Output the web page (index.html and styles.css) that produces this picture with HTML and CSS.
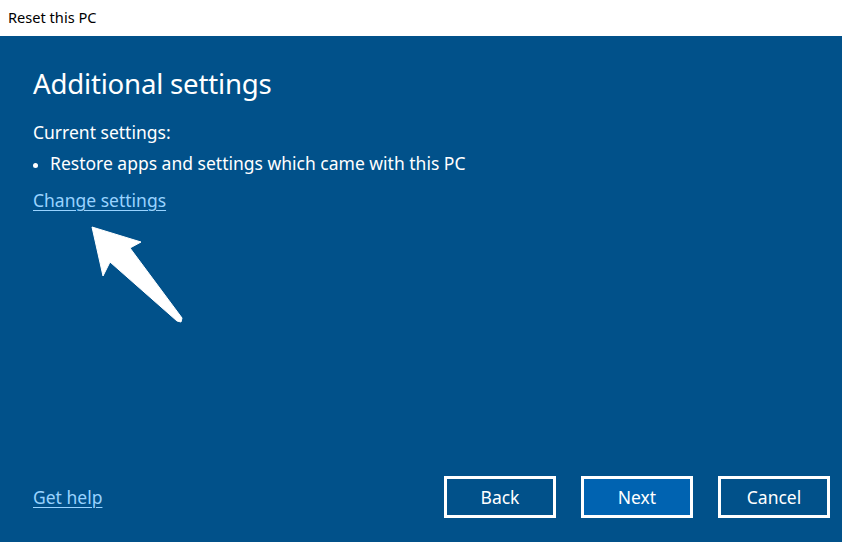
FILE: index.html
```html
<!DOCTYPE html>
<html>
<head>
<meta charset="utf-8">
<link rel="stylesheet" href="styles.css">
</head>
<body>
<div class="window">
  <div class="titlebar">Reset this PC</div>
  <div class="content">
    <div class="main">
      <h1 class="heading">Additional settings</h1>
      <p class="label">Current settings:</p>
      <ul class="list">
        <li>Restore apps and settings which came with this PC</li>
      </ul>
      <a class="link change" href="#">Change settings</a>
      <svg class="arrow" width="100" height="110" viewBox="88 222 100 110">
        <polygon points="92,227 141,242 130,248 182,318 181,322 177,321 110,262 103,276" fill="#ffffff" stroke="#ffffff" stroke-width="1" stroke-linejoin="round"/>
      </svg>
    </div>
    <div class="footer">
      <a class="link" href="#">Get help</a>
      <div class="buttons">
        <button class="btn">Back</button>
        <button class="btn primary">Next</button>
        <button class="btn">Cancel</button>
      </div>
    </div>
  </div>
</div>
</body>
</html>
```
FILE: styles.css
```css
* { box-sizing: border-box; }
html, body { margin: 0; padding: 0; }
body {
  width: 842px;
  height: 542px;
  overflow: hidden;
  font-family: "Noto Sans", "Open Sans", sans-serif;
  background: #01518a;
}
.window {
  display: flex;
  flex-direction: column;
  height: 542px;
}
.titlebar {
  height: 36px;
  background: #ffffff;
  color: #000000;
  font-size: 14.6px;
  padding: 8px 0 0 8px;
  line-height: 19px;
}
.content {
  flex: 1;
  display: flex;
  flex-direction: column;
  justify-content: space-between;
  background: #01518a;
  color: #ffffff;
  padding: 0 12px 24px 33px;
}
.main {
  position: relative;
}
.heading {
  margin: 27px 0 0 0;
  font-weight: 400;
  font-size: 27.6px;
  line-height: 40px;
  letter-spacing: -0.2px;
}
.label {
  margin: 18px 0 0 0;
  font-size: 17.5px;
  line-height: 23px;
}
.list {
  margin: 8px 0 0 0;
  padding: 0 0 0 17px;
  font-size: 17.5px;
  line-height: 23px;
}
.list li::marker { font-size: 15px; }
.link {
  color: #99d3ff;
  text-decoration: underline;
  text-underline-offset: 3px;
  text-decoration-thickness: 1px;
  font-size: 17.5px;
  line-height: 23px;
}
.change {
  display: inline-block;
  margin-top: 14px;
}
.arrow {
  position: absolute;
  left: 55px;
  top: 186px;
}
.footer {
  display: flex;
  align-items: center;
  justify-content: space-between;
}
.buttons {
  display: flex;
  gap: 25px;
}
.btn {
  width: 112px;
  height: 42px;
  border: 3px solid #ffffff;
  background: transparent;
  color: #ffffff;
  font-family: "Noto Sans", "Open Sans", sans-serif;
  font-size: 17.5px;
  padding: 0;
}
.btn.primary {
  background: #0063b1;
}
```
